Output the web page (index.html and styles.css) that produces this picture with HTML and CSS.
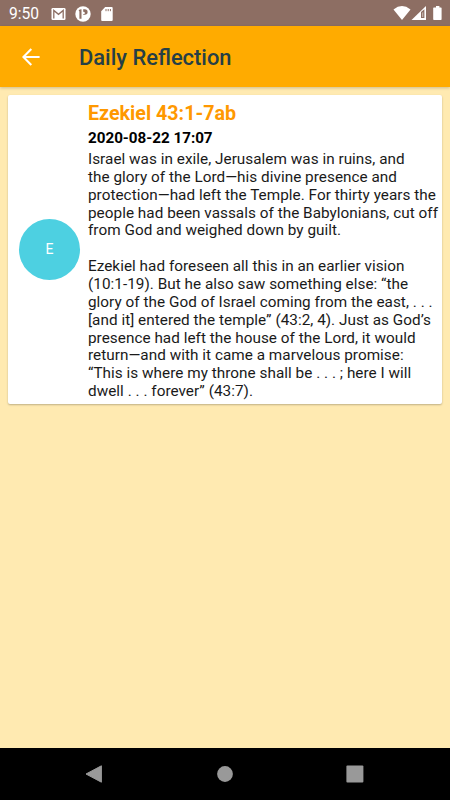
FILE: index.html
```html
<!DOCTYPE html>
<html lang="en">
<head>
    <meta charset="UTF-8">
    <meta name="viewport" content="width=device-width, initial-scale=1.0">
    <title>Daily Reflection</title>
    <link rel="stylesheet" href="styles.css">
</head>
<body>
    <div class="status-bar">
        <span class="clock">9:50</span>
        <svg class="mail" width="15" height="12" viewBox="0 0 15 12">
            <rect x="0.5" width="14" height="12" rx="1.3" fill="#fff"/>
            <path d="M2.8 10.6V2.4L7.5 6.3l4.7-3.9v8.2" fill="none" stroke="#8d6e63" stroke-width="1.3"/>
        </svg>
        <svg class="app" width="16" height="16" viewBox="0 0 16 16">
            <circle cx="8" cy="8" r="7.7" fill="#fff"/>
            <path d="M3.6 4.2q1-1 2.9-1v9.6H4.4V5.4z" fill="#8d6e63"/>
            <path d="M8.2 3.2h1.6a2.8 2.8 0 0 1 0 5.6H8.2z" fill="#8d6e63"/>
            <circle cx="8.6" cy="6.9" r="1.2" fill="#fff"/>
        </svg>
        <svg class="card-icon" width="12" height="14" viewBox="0 0 12 14">
            <path d="M4.2 0h6.5q1 0 1 1v12q0 1-1 1H1.2q-1 0-1-1V4.2z" fill="#fff"/>
            <path d="M5 2v2.2M7.2 2v2.2M9.4 2v2.2" stroke="#8d6e63" stroke-width="1"/>
        </svg>
        <svg class="signals" width="50" height="14" viewBox="0 0 50 14">
            <path d="M0.5 3.4Q9-3.2 17.5 3.4L9 14z" fill="#fff"/>
            <path d="M33 0v14H18.5z" fill="#fff"/>
            <path d="M28 6l3.4-2.8V12H28z" fill="#8d6e63"/>
            <path d="M29.3 6.8l.9-.8v5h-.9z" fill="#d7ccc8"/>
            <path d="M43 0h3.4v1.4h1.5q.7 0 .7.7v11.2q0 .7-.7.7h-7q-.7 0-.7-.7V2.1q0-.7.7-.7H43z" fill="#fff"/>
        </svg>
    </div>

    <div class="app-bar">
        <svg width="18" height="18" viewBox="0 0 18 18">
            <path d="M17.6 9H1.6M9.3 1.1L1.4 9l7.9 7.9" fill="none" stroke="#fff" stroke-width="2.1"/>
        </svg>
        <h1>Daily Reflection</h1>
    </div>

    <div class="content">
        <div class="card">
            <div class="avatar">E</div>
            <div class="text">
                <h2>Ezekiel 43:1-7ab</h2>
                <h3>2020-08-22 17:07</h3>
                <p>Israel was in exile, Jerusalem was in ruins, and<br>
                the glory of the Lord—his divine presence and<br>
                protection—had left the Temple. For thirty years the<br>
                people had been vassals of the Babylonians, cut off<br>
                from God and weighed down by guilt.</p>
                <p>Ezekiel had foreseen all this in an earlier vision<br>
                (10:1-19). But he also saw something else: “the<br>
                glory of the God of Israel coming from the east, . . .<br>
                [and it] entered the temple” (43:2, 4). Just as God’s<br>
                presence had left the house of the Lord, it would<br>
                return—and with it came a marvelous promise:<br>
                “This is where my throne shall be . . . ; here I will<br>
                dwell . . . forever” (43:7).</p>
            </div>
        </div>
    </div>

    <div class="nav-bar">
        <svg width="18" height="20" viewBox="0 0 18 20">
            <path d="M16.4 1.8v16.4L1 10z" fill="#999" stroke="#999" stroke-linejoin="round"/>
        </svg>
        <svg width="16" height="16" viewBox="0 0 16 16">
            <circle cx="8" cy="8" r="7.9" fill="#999"/>
        </svg>
        <svg width="18" height="18" viewBox="0 0 18 18">
            <rect x="0.4" y="0.4" width="17" height="17" rx="1" fill="#999"/>
        </svg>
    </div>
</body>
</html>
```
FILE: styles.css
```css
body {
    margin: 0;
    width: 450px;
    height: 800px;
    display: flex;
    flex-direction: column;
    overflow: hidden;
    font-family: Roboto, sans-serif;
    background: #ffeab1;
}

svg {
    display: block;
    flex: none;
}

h1, h2, h3, p {
    margin: 0;
}

/* Status bar */
.status-bar {
    height: 26px;
    display: flex;
    align-items: center;
    background: #8d6e63;
    color: #fff;
}

.clock {
    width: 42px;
    padding-left: 9px;
    font-size: 15.6px;
    line-height: 26px;
    margin-top: 1px;
}

.mail {
    margin-top: 1px;
}

.app {
    margin-left: 9px;
    margin-top: 1px;
}

.card-icon {
    margin-left: 10px;
    margin-top: 1px;
}

.signals {
    margin-left: auto;
    margin-right: 7px;
}

/* App bar */
.app-bar {
    position: relative;
    height: 61px;
    display: flex;
    align-items: center;
    padding-left: 22px;
    background: #ffab00;
    box-shadow: 0 1px 3px rgba(0, 0, 0, 0.2);
}

.app-bar h1 {
    margin-left: 39px;
    margin-top: 2px;
    font-size: 21.9px;
    font-weight: 500;
    color: #263f46;
}

/* Card */
.content {
    flex: 1;
    padding: 8px;
}

.card {
    display: flex;
    align-items: center;
    height: 309px;
    background: #fff;
    border-radius: 2px;
    box-shadow: 0 1px 2px rgba(0, 0, 0, 0.25);
}

.avatar {
    flex: none;
    width: 61px;
    height: 61px;
    margin: 0 8px 0 11px;
    border-radius: 50%;
    background: #4dd0e1;
    color: #fff;
    font-size: 14px;
    line-height: 61px;
    text-align: center;
}

.text {
    align-self: flex-start;
    padding-top: 6px;
    white-space: nowrap;
    color: #000;
}

.text h2 {
    font-size: 19.7px;
    font-weight: 700;
    line-height: 26px;
    color: #ff9800;
}

.text h3 {
    font-size: 15.2px;
    font-weight: 700;
    line-height: 22px;
    margin-bottom: 2px;
}

.text p {
    font-size: 15.3px;
    line-height: 17.86px;
    letter-spacing: 0.03px;
    color: #1a1a1a;
}

.text p + p {
    margin-top: 17.86px;
}

/* Navigation bar */
.nav-bar {
    height: 52px;
    display: flex;
    align-items: center;
    justify-content: space-between;
    box-sizing: border-box;
    padding: 0 86px 0 85px;
    background: #000;
}
```
